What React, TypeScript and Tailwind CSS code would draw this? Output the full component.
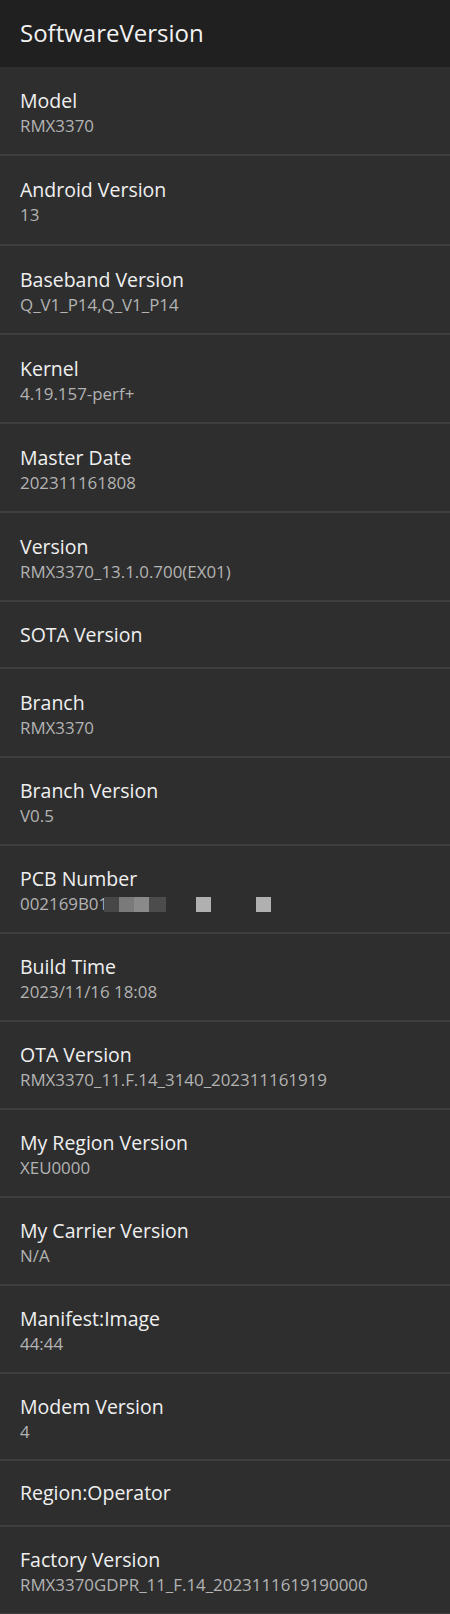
import React from "react";

interface Item {
  title: string;
  value?: React.ReactNode;
  h: string;
}

const PcbValue = () => (
  <span className="flex items-center">
    <span>002169B01</span>
    <span className="inline-block h-[15px] w-[15px] -ml-[4px] bg-[#474747]" />
    <span className="inline-block h-[15px] w-[15px] bg-[#7a7a7a]" />
    <span className="inline-block h-[15px] w-[15px] bg-[#8a8a8a]" />
    <span className="inline-block h-[15px] w-[17px] bg-[#4c4c4c]" />
    <span className="inline-block h-[15px] w-[30px]" />
    <span className="inline-block h-[15px] w-[15px] bg-[#b0b0b0]" />
    <span className="inline-block h-[15px] w-[45px]" />
    <span className="inline-block h-[15px] w-[15px] bg-[#b0b0b0]" />
  </span>
);

const items: Item[] = [
  { title: "Model", value: "RMX3370", h: "h-[89px]" },
  { title: "Android Version", value: "13", h: "h-[90px]" },
  { title: "Baseband Version", value: "Q_V1_P14,Q_V1_P14", h: "h-[89px]" },
  { title: "Kernel", value: "4.19.157-perf+", h: "h-[89px]" },
  { title: "Master Date", value: "202311161808", h: "h-[89px]" },
  { title: "Version", value: "RMX3370_13.1.0.700(EX01)", h: "h-[89px]" },
  { title: "SOTA Version", h: "h-[67px]" },
  { title: "Branch", value: "RMX3370", h: "h-[89px]" },
  { title: "Branch Version", value: "V0.5", h: "h-[88px]" },
  { title: "PCB Number", value: <PcbValue />, h: "h-[88px]" },
  { title: "Build Time", value: "2023/11/16 18:08", h: "h-[88px]" },
  { title: "OTA Version", value: "RMX3370_11.F.14_3140_202311161919", h: "h-[88px]" },
  { title: "My Region Version", value: "XEU0000", h: "h-[88px]" },
  { title: "My Carrier Version", value: "N/A", h: "h-[88px]" },
  { title: "Manifest:Image", value: "44:44", h: "h-[88px]" },
  { title: "Modem Version", value: "4", h: "h-[87px]" },
  { title: "Region:Operator", h: "h-[66px]" },
  { title: "Factory Version", value: "RMX3370GDPR_11_F.14_2023111619190000", h: "h-[88px]" },
];

export default function App() {
  return (
    <div className="w-[450px] h-[1614px] overflow-hidden bg-[#2e2e2e] font-['Open_Sans',sans-serif]">
      <div className="h-[67px] bg-[#202020] flex items-center px-5">
        <h1 className="text-[24px] text-[#f2f2f2] leading-none pb-[2px]">SoftwareVersion</h1>
      </div>
      {items.map((item, i) => (
        <div
          key={i}
          className={`${item.h} ${item.value ? "pt-[4px]" : ""} flex flex-col justify-center px-5 border-b-2 border-[#3e3e3e] bg-[#2e2e2e]`}
        >
          <div className="text-[19.5px] leading-[24px] text-[#f0f0f0]">{item.title}</div>
          {item.value && (
            <div className="mt-[2px] text-[16.9px] leading-[22px] text-[#b3b3b3]">{item.value}</div>
          )}
        </div>
      ))}
    </div>
  );
}
